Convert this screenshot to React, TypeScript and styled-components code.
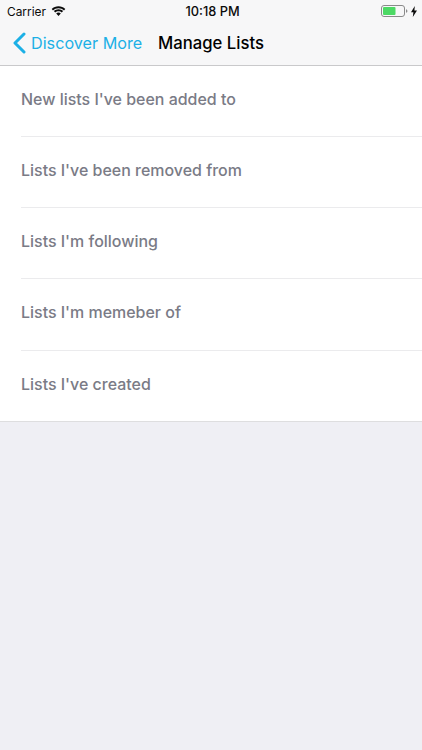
import React from "react";
import styled, { createGlobalStyle } from "styled-components";

const Global = createGlobalStyle`
  html, body { margin: 0; padding: 0; background: #efeff4; }
  * { box-sizing: border-box; }
`;

const Screen = styled.div`
  width: 422px;
  height: 750px;
  overflow: hidden;
  background: #efeff4;
  font-family: Inter, "Liberation Sans", sans-serif;
  display: flex;
  flex-direction: column;
`;

const Header = styled.header`
  background: #f7f7f8;
  height: 66px;
  flex: none;
  border-bottom: 1px solid #c9c9cb;
  display: flex;
  flex-direction: column;
`;

const StatusBar = styled.div`
  height: 22px;
  padding: 0 5px 0 7px;
  display: grid;
  grid-template-columns: 1fr auto 1fr;
  align-items: center;
  font-size: 11.9px;
  color: #0b0b0b;
`;

const StatusLeft = styled.div`
  display: flex;
  align-items: center;
  gap: 5px;
`;

const StatusRight = styled.div`
  display: flex;
  align-items: center;
  justify-content: flex-end;
  gap: 3px;
`;

const Clock = styled.span`
  font-weight: 500;
  font-size: 12.8px;
  padding-right: 0;
  padding-left: 1px;
`;

const NavBar = styled.nav`
  flex: 1;
  display: flex;
  align-items: center;
  padding: 0 0 1px 13px;
`;

const Back = styled.div`
  display: flex;
  align-items: center;
  gap: 5px;
  color: #1cb0e6;
  font-size: 16.2px;
  width: 145px;
`;

const Title = styled.h1`
  margin: 0;
  font-size: 16.7px;
  font-weight: 500;
  color: #000;
`;

const List = styled.ul`
  list-style: none;
  margin: 0;
  padding: 0 0 0 21px;
  background: #fff;
  border-bottom: 1px solid #dededf;
`;

const Row = styled.li`
  height: 71.15px;
  display: flex;
  align-items: center;
  padding-bottom: 3.6px;
  font-size: 15.96px;
  font-weight: 500;
  color: #7a7b86;
  border-bottom: 1px solid #ebebed;
  &:last-child {
    border-bottom: 0;
    height: 70.15px;
    padding-bottom: 2.6px;
  }
`;

const rows = [
  "New lists I've been added to",
  "Lists I've been removed from",
  "Lists I'm following",
  "Lists I'm memeber of",
  "Lists I've created",
];

export default function App() {
  return (
    <Screen>
      <Global />
      <Header>
        <StatusBar>
          <StatusLeft>
            <span>Carrier</span>
            <svg width="15" height="11" viewBox="0 0 15 11" fill="#0b0b0b">
              <path d="M7.5 2.2c2.1 0 4 .8 5.5 2.2l1.3-1.4C12.5 1.200 10.100.2 7.500.2S2.500 1.200.7 3L2 4.400C3.500 3 5.400 2.200 7.500 2.200z" />
              <path d="M7.500 5.200c1.300 0 2.400.5 3.300 1.300l1.300-1.400C10.900 4 9.300 3.300 7.500 3.300S4.100 4 2.900 5.100l1.300 1.400c.9-.8 2-1.300 3.300-1.300z" />
              <path d="M7.500 6.500c-.9 0-1.700.4-2.300.9l2.300 2.500 2.300-2.500c-.6-.5-1.400-.9-2.300-.9z" />
            </svg>
          </StatusLeft>
          <Clock>10:18 PM</Clock>
          <StatusRight>
            <svg width="27" height="12" viewBox="0 0 27 12">
              <rect x="0.500" y="0.500" width="23" height="11" rx="2.500" fill="none" stroke="#8a8a8a" />
              <rect x="2" y="2" width="12.500" height="8" rx="1" fill="#4cd964" />
              <path d="M25 4.200c.9.200 1.400.9 1.400 1.800s-.5 1.600-1.400 1.800z" fill="#8a8a8a" />
            </svg>
            <svg width="6" height="11" viewBox="0 0 6 11" fill="#0b0b0b">
              <path d="M3.800 0L0 6.200h2.400L1.800 11 6 4.500H3.400z" />
            </svg>
          </StatusRight>
        </StatusBar>
        <NavBar>
          <Back>
            <svg width="13" height="22" viewBox="0 0 13 22" fill="none" stroke="#1cb0e6" strokeWidth="3" strokeLinecap="round" strokeLinejoin="round">
              <path d="M11 2L2 11l9 9" />
            </svg>
            <span>Discover More</span>
          </Back>
          <Title>Manage Lists</Title>
        </NavBar>
      </Header>
      <List>
        {rows.map((r) => (
          <Row key={r}>{r}</Row>
        ))}
      </List>
    </Screen>
  );
}
